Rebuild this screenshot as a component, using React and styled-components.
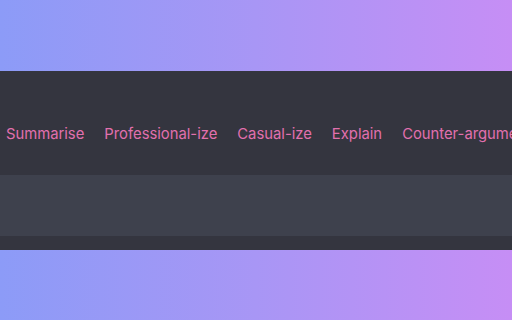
import React from "react";
import styled, { createGlobalStyle } from "styled-components";

const Global = createGlobalStyle`
  html, body { margin: 0; padding: 0; }
  body {
    width: 512px; height: 320px; overflow: hidden;
    font-family: Inter, "Liberation Sans", sans-serif;
  }
  #root { height: 100%; }
`;

const Page = styled.div`
  width: 512px;
  height: 320px;
  background: linear-gradient(90deg, #8c9bf7 0%, #a896f5 50%, #c68ef5 100%);
  display: flex;
  flex-direction: column;
  padding-top: 71px;
  box-sizing: border-box;
`;

const Panel = styled.div`
  background: #34353f;
  height: 179px;
  display: flex;
  flex-direction: column;
  overflow: hidden;
`;

const Toolbar = styled.div`
  height: 104px;
  box-sizing: border-box;
  display: flex;
  align-items: center;
  gap: 20px;
  padding: 23px 0 0 6px;
  white-space: nowrap;
  flex: none;
`;

const Action = styled.span`
  color: #e270ae;
  font-size: 14.8px;
  line-height: 1;
`;

const InputBand = styled.div`
  height: 61px;
  background: #3e414d;
  flex: none;
`;

const actions = ["Summarise", "Professional-ize", "Casual-ize", "Explain", "Counter-argument"];

export default function App() {
  return (
    <Page>
      <Global />
      <Panel>
        <Toolbar>
          {actions.map((a) => (
            <Action key={a}>{a}</Action>
          ))}
        </Toolbar>
        <InputBand />
      </Panel>
    </Page>
  );
}
